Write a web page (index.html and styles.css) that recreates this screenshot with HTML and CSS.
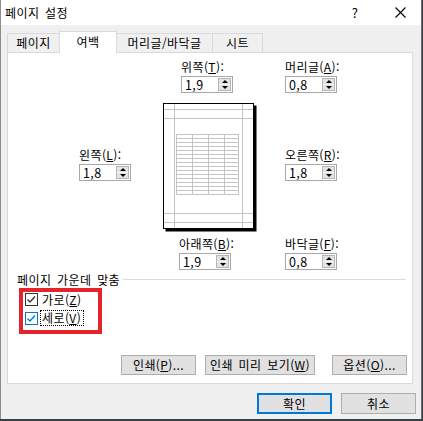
FILE: index.html
```html
<!DOCTYPE html>
<html lang="ko">
<head>
    <meta charset="UTF-8">
    <title>페이지 설정</title>
    <link rel="stylesheet" href="styles.css">
</head>
<body>

<div class="dialog">
    <div class="titlebar">
        <span class="title">페이지 설정</span>
        <span class="help">?</span>
        <span class="close">
            <svg width="11" height="11" viewBox="0 0 11 11"><path d="M0.5 0.5 L10.5 10.5 M10.5 0.5 L0.5 10.5" stroke="#000" stroke-width="1.1" fill="none"/></svg>
        </span>
    </div>

    <div class="tabs">
        <div class="tab tab-page">페이지</div>
        <div class="tab tab-margin active">여백</div>
        <div class="tab tab-header">머리글/바닥글</div>
        <div class="tab tab-sheet">시트</div>
    </div>

    <div class="panel">
        <div class="margins">
            <div class="field f-top">
                <div class="field-label">위쪽(<u>T</u>):</div>
                <div class="spin"><span class="spin-value">1,9</span><span class="spin-btns"><span class="up"></span><span class="down"></span></span></div>
            </div>
            <div class="field f-header">
                <div class="field-label">머리글(<u>A</u>):</div>
                <div class="spin"><span class="spin-value">0,8</span><span class="spin-btns"><span class="up"></span><span class="down"></span></span></div>
            </div>
            <div class="field f-left">
                <div class="field-label">왼쪽(<u>L</u>):</div>
                <div class="spin"><span class="spin-value">1,8</span><span class="spin-btns"><span class="up"></span><span class="down"></span></span></div>
            </div>

            <div class="preview">
                <svg width="94" height="129" viewBox="0 0 94 129">
                    <rect x="2.5" y="2.5" width="91" height="126" fill="#000"/>
                    <rect x="0.5" y="0.5" width="90" height="125" fill="#fff" stroke="#000"/>
                    <g stroke="#c4c4c4" fill="none">
                        <path d="M11.5 1 V125 M79.5 1 V125 M1 6.5 H90 M1 15.5 H90 M1 110.5 H90 M1 119.5 H90"/>
                        <rect x="13.5" y="31.5" width="62" height="60"/>
                        <path d="M29.5 31.5 V91.5 M45.5 31.5 V91.5 M61.5 31.5 V91.5"/>
                        <path d="M13.5 35.5 H75.5 M13.5 39.5 H75.5 M13.5 43.5 H75.5 M13.5 47.5 H75.5 M13.5 51.5 H75.5 M13.5 55.5 H75.5 M13.5 59.5 H75.5 M13.5 63.5 H75.5 M13.5 67.5 H75.5 M13.5 71.5 H75.5 M13.5 75.5 H75.5 M13.5 79.5 H75.5 M13.5 83.5 H75.5 M13.5 87.5 H75.5"/>
                    </g>
                </svg>
            </div>

            <div class="field f-right">
                <div class="field-label">오른쪽(<u>R</u>):</div>
                <div class="spin"><span class="spin-value">1,8</span><span class="spin-btns"><span class="up"></span><span class="down"></span></span></div>
            </div>
            <div class="field f-bottom">
                <div class="field-label">아래쪽(<u>B</u>):</div>
                <div class="spin"><span class="spin-value">1,9</span><span class="spin-btns"><span class="up"></span><span class="down"></span></span></div>
            </div>
            <div class="field f-footer">
                <div class="field-label">바닥글(<u>F</u>):</div>
                <div class="spin"><span class="spin-value">0,8</span><span class="spin-btns"><span class="up"></span><span class="down"></span></span></div>
            </div>
        </div>

        <div class="group-title"><span>페이지 가운데 맞춤</span></div>

        <div class="checks">
            <div class="check">
                <span class="box">
                    <svg width="13" height="13" viewBox="0 0 13 13"><rect x="0.5" y="0.5" width="12" height="12" fill="#fff" stroke="#333"/><path d="M2.5 6.5 L5 9 L10 3.5" stroke="#333" stroke-width="1.3" fill="none"/></svg>
                </span>
                <span class="check-text">가로(<u>Z</u>)</span>
            </div>
            <div class="check">
                <span class="box">
                    <svg width="13" height="13" viewBox="0 0 13 13"><rect x="0.5" y="0.5" width="12" height="12" fill="#fff" stroke="#0078d7"/><path d="M2.5 6.5 L5 9 L10 3.5" stroke="#0078d7" stroke-width="1.3" fill="none"/></svg>
                </span>
                <span class="check-text focused">세로(<u>V</u>)</span>
            </div>
        </div>

        <div class="panel-buttons">
            <button class="btn btn-print">인쇄(<u>P</u>)...</button>
            <button class="btn btn-preview">인쇄 미리 보기(<u>W</u>)</button>
            <button class="btn btn-options">옵션(<u>O</u>)...</button>
        </div>
    </div>

    <div class="footer">
        <button class="btn btn-ok">확인</button>
        <button class="btn btn-cancel">취소</button>
    </div>
</div>

</body>
</html>
```

FILE: styles.css
```css
/* Excel page setup dialog, margins tab */
* {
    box-sizing: border-box;
}
body {
    margin: 0;
    background: #3b3f46;
    font-family: "Noto Sans CJK KR", "Noto Sans", sans-serif;
    font-size: 12px;
    letter-spacing: 0.4px;
    word-spacing: 2px;
    color: #000;
}
u {
    text-decoration: underline;
    text-underline-offset: 1px;
}
.dialog {
    width: 422px;
    height: 419px;
    background: #f0f0f0;
    border-left: 1px solid #8c8c8c;
    border-right: 1px solid #6b6b6b;
}
.titlebar {
    height: 25px;
    background: #fff;
    display: flex;
    align-items: center;
    padding-left: 4px;
    line-height: 15px;
}
.title {
    flex: 1;
}
.help {
    width: 14px;
    text-align: center;
    margin-right: 17px;
    font-size: 13px;
}
.close {
    width: 42px;
    display: flex;
    justify-content: center;
}
.tabs {
    height: 27px;
    display: flex;
    align-items: flex-end;
    padding-left: 6px;
}
.tab {
    height: 19px;
    line-height: 18px;
    border: 1px solid #d9d9d9;
    border-bottom: none;
    text-align: center;
    margin-left: -1px;
    white-space: nowrap;
}
.tab-page {
    width: 53px;
    margin-left: 0;
}
.tab-margin {
    width: 58px;
}
.tab-header {
    width: 97px;
}
.tab-sheet {
    width: 51px;
}
.tab.active {
    height: 22px;
    line-height: 20px;
    background: #fff;
    margin-bottom: -1px;
    position: relative;
    z-index: 1;
}
.panel {
    height: 332px;
    margin: 0 8px 0 6px;
    background: #fff;
    border: 1px solid #d9d9d9;
    padding-top: 6px;
}
.margins {
    display: grid;
    grid-template-columns: 71px 52px 32px 93px 29px 52px;
    grid-template-rows: 34px 143px 34px;
}
.f-top {
    grid-column: 4;
    grid-row: 1;
    margin-left: 18px;
}
.f-header {
    grid-column: 6;
    grid-row: 1;
}
.f-left {
    grid-column: 2;
    grid-row: 2;
    margin-top: 54px;
}
.preview {
    grid-column: 4;
    grid-row: 2;
    margin-top: 10px;
    line-height: 0;
}
.f-right {
    grid-column: 6;
    grid-row: 2;
    margin-top: 54px;
}
.f-bottom {
    grid-column: 4;
    grid-row: 3;
    margin-left: 16px;
}
.f-footer {
    grid-column: 6;
    grid-row: 3;
}
.field-label {
    height: 15px;
    line-height: 15px;
    margin-bottom: 2px;
    white-space: nowrap;
}
.spin {
    width: 52px;
    height: 17px;
    border: 1px solid #a9a9a9;
    display: flex;
    align-items: center;
    padding-left: 3px;
    background: #fff;
}
.spin-value {
    flex: 1;
    line-height: 15px;
    font-size: 12.5px;
}
.spin-btns {
    width: 13px;
    height: 13px;
    margin-right: 1px;
    border: 1px solid #b5b5b5;
    display: flex;
    flex-direction: column;
    background: #e3e3e3;
}
.spin-btns .up,
.spin-btns .down {
    flex: 1;
    display: flex;
    align-items: center;
    justify-content: center;
}
.spin-btns .up {
    border-bottom: 1px solid #f6f6f6;
}
.spin-btns .up::after {
    content: "";
    border-left: 3px solid transparent;
    border-right: 3px solid transparent;
    border-bottom: 3px solid #000;
}
.spin-btns .down::after {
    content: "";
    border-left: 3px solid transparent;
    border-right: 3px solid transparent;
    border-top: 3px solid #000;
}
.group-title {
    display: flex;
    align-items: center;
    height: 15px;
    line-height: 15px;
    margin: 2px 6px 0 9px;
    white-space: nowrap;
}
.group-title::after {
    content: "";
    flex: 1;
    border-top: 1px solid #dcdcdc;
    margin-left: 3px;
}
.checks {
    width: 83px;
    height: 46px;
    border: 4px solid #e5232b;
    margin: 1px 0 0 11px;
}
.check {
    display: flex;
    align-items: flex-start;
    height: 19px;
}
.box {
    width: 13px;
    height: 13px;
    margin: 1px 0 0 2px;
    line-height: 0;
}
.check-text {
    line-height: 15px;
    margin-left: 4px;
    white-space: nowrap;
}
.check-text.focused {
    border: 1px dotted #000;
    line-height: 14px;
    margin: -1px 0 0 2px;
    padding: 0 2px 0 1px;
}
.panel-buttons {
    display: flex;
    justify-content: flex-end;
    margin-top: 21px;
    padding-right: 5px;
}
.btn {
    height: 20px;
    padding: 0;
    border: 1px solid #adadad;
    background: #e1e1e1;
    font-family: "Noto Sans CJK KR", "Noto Sans", sans-serif;
    font-size: 12px;
    letter-spacing: 0.4px;
    word-spacing: 2px;
    line-height: 16px;
    color: #000;
    white-space: nowrap;
}
.btn-print {
    width: 75px;
}
.btn-preview {
    width: 110px;
    margin-left: 9px;
}
.btn-options {
    width: 75px;
    margin-left: 17px;
}
.footer {
    display: flex;
    justify-content: flex-end;
    margin-top: 9px;
    padding-right: 5px;
}
.footer .btn {
    height: 21px;
    width: 75px;
}
.btn-ok {
    border: 2px solid #0078d7;
}
.btn-cancel {
    margin-left: 9px;
}
```
